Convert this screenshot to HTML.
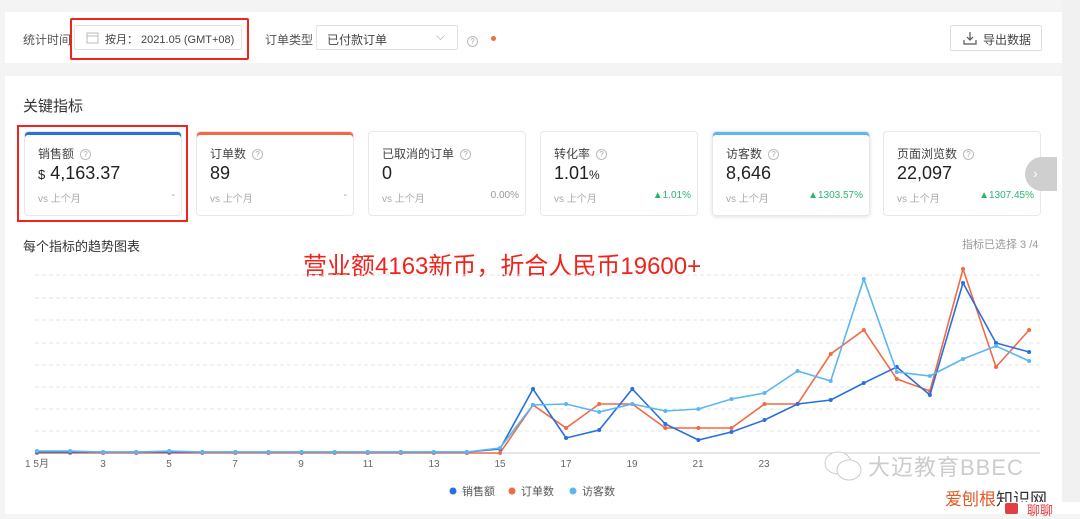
<!DOCTYPE html>
<html><head><meta charset="utf-8"><style>
*{margin:0;padding:0;box-sizing:border-box}
body{width:1080px;height:514px;background:#f4f4f5;font-family:"Liberation Sans","Noto Sans CJK SC",sans-serif;position:relative;overflow:hidden;color:#333}
.card{position:absolute;background:#fff}
.abs{position:absolute}
.q{display:inline-block;width:11px;height:11px;border:1px solid #bbb;border-radius:50%;font-size:8px;color:#aaa;text-align:center;line-height:9px;vertical-align:1px;margin-left:6px}
.m{position:absolute;top:131px;width:158px;height:85px;background:#fff;border:1px solid #e8e8e8;border-radius:4px}
.m .t{position:absolute;left:13px;top:13px;font-size:12px;color:#444}
.m .v{position:absolute;left:13px;top:31px;font-size:18px;color:#222}
.m .s{position:absolute;left:13px;top:58px;font-size:10px;color:#aaa}
.m .p{position:absolute;right:6px;top:58px;font-size:10px;color:#999}
.g{color:#2bb56b!important}
</style></head><body>
<div class="card" style="left:5px;top:12px;width:1057px;height:51px"></div>
<div class="abs" style="left:23px;top:31px;font-size:12px;color:#555">统计时间</div>
<div class="abs" style="left:74px;top:25px;width:168px;height:25px;border:1px solid #e3e3e3;border-radius:2px"></div>
<svg class="abs" style="left:86px;top:31px" width="13" height="13"><rect x="1" y="2" width="11" height="10" fill="none" stroke="#bbb"/><line x1="1" y1="5" x2="12" y2="5" stroke="#bbb"/></svg>
<div class="abs" style="left:105px;top:31px;font-size:11px;color:#444;white-space:nowrap">按月： 2021.05 (GMT+08)</div>
<div class="abs" style="left:70px;top:18px;width:179px;height:42px;border:2px solid #f0241c;border-radius:2px"></div>
<div class="abs" style="left:265px;top:31px;font-size:12px;color:#555">订单类型</div>
<div class="abs" style="left:316px;top:25px;width:142px;height:25px;border:1px solid #e3e3e3;border-radius:2px;font-size:12px;color:#444;padding:5px 10px">已付款订单<span style="position:absolute;right:12px;top:3px;color:#aaa">⌵</span></div>
<div class="abs" style="left:467px;top:32px"><span class="q" style="margin:0">?</span></div>
<div class="abs" style="left:491px;top:36px;width:5px;height:5px;border-radius:50%;background:#f26a45"></div>
<div class="abs" style="left:950px;top:25px;width:92px;height:26px;border:1px solid #ddd;border-radius:2px;font-size:12px;color:#444;padding:5px 0 0 32px">导出数据</div>
<svg class="abs" style="left:963px;top:31px" width="14" height="14"><path d="M7 1v8M4 6l3 3 3-3M1 9v4h12V9" fill="none" stroke="#555" stroke-width="1.2"/></svg>

<div class="card" style="left:5px;top:76px;width:1057px;height:438px"></div>
<div class="abs" style="left:23px;top:95px;font-size:15px;color:#333">关键指标</div>

<div class="m" style="left:24px;box-shadow:inset 0 3px #2a6fdb"><div class="t">销售额<span class="q">?</span></div><div class="v"><span style="font-size:13px">$</span> 4,163.37</div><div class="s">vs 上个月</div><div class="p">-</div></div>
<div class="abs" style="left:17px;top:125px;width:171px;height:97px;border:2px solid #f0241c"></div>
<div class="m" style="left:196px;box-shadow:inset 0 3px #f26a45"><div class="t">订单数<span class="q">?</span></div><div class="v">89</div><div class="s">vs 上个月</div><div class="p">-</div></div>
<div class="m" style="left:368px"><div class="t">已取消的订单<span class="q">?</span></div><div class="v">0</div><div class="s">vs 上个月</div><div class="p">0.00%</div></div>
<div class="m" style="left:540px"><div class="t">转化率<span class="q">?</span></div><div class="v">1.01<span style="font-size:12px">%</span></div><div class="s">vs 上个月</div><div class="p g">▲1.01%</div></div>
<div class="m" style="left:712px;box-shadow:inset 0 3px #5bb6f2,0 1px 4px rgba(0,0,0,.12)"><div class="t">访客数<span class="q">?</span></div><div class="v">8,646</div><div class="s">vs 上个月</div><div class="p g">▲1303.57%</div></div>
<div class="m" style="left:883px"><div class="t">页面浏览数<span class="q">?</span></div><div class="v">22,097</div><div class="s">vs 上个月</div><div class="p g">▲1307.45%</div></div>
<div class="abs" style="left:1025px;top:157px;width:32px;height:34px;border-radius:17px 0 0 17px;background:#cfcfcf;color:#fff;font-size:14px;padding:8px 0 0 8px">›</div>

<div class="abs" style="left:23px;top:236px;font-size:13px;color:#333">每个指标的趋势图表</div>
<div class="abs" style="left:962px;top:236px;font-size:11px;color:#999">指标已选择 3 /4</div>
<div class="abs" style="left:303px;top:246px;font-size:24px;color:#f0241c">营业额4163新币，折合人民币19600+</div>

<svg class="abs" style="left:0;top:0" width="1080" height="514">
<g stroke="#e6e6e6" stroke-dasharray="4 3">
<line x1="35" x2="1040" y1="275" y2="275"/><line x1="35" x2="1040" y1="298" y2="298"/><line x1="35" x2="1040" y1="320" y2="320"/><line x1="35" x2="1040" y1="343" y2="343"/><line x1="35" x2="1040" y1="365" y2="365"/><line x1="35" x2="1040" y1="387" y2="387"/><line x1="35" x2="1040" y1="409" y2="409"/><line x1="35" x2="1040" y1="431" y2="431"/></g>
<line x1="35" x2="1040" y1="453" y2="453" stroke="#ccc"/>
<g font-size="10" fill="#666" text-anchor="middle" font-family="Liberation Sans,Noto Sans CJK SC,sans-serif">
<text x="37" y="467">1 5月</text><text x="103" y="467">3</text><text x="169" y="467">5</text><text x="235" y="467">7</text><text x="301" y="467">9</text><text x="368" y="467">11</text><text x="434" y="467">13</text><text x="500" y="467">15</text><text x="566" y="467">17</text><text x="632" y="467">19</text><text x="698" y="467">21</text><text x="764" y="467">23</text></g>
<g id="c"></g>
<g font-size="11" fill="#555" font-family="Liberation Sans,Noto Sans CJK SC,sans-serif">
<circle cx="453" cy="491" r="3.5" fill="#2a6fdb"/><text x="462" y="495">销售额</text>
<circle cx="512" cy="491" r="3.5" fill="#f26a45"/><text x="521" y="495">订单数</text>
<circle cx="573" cy="491" r="3.5" fill="#5bb6f2"/><text x="582" y="495">访客数</text></g>
</svg>
<script>
var B=[452,452,452,452,452,452,452,452,452,452,452,452,452,452,449,389,438,430,389,424,440,432,420,404,400,383,367,395,283,343,352];
var O=[453,453,453,453,453,453,453,453,453,453,453,453,453,453,453,405,428,404,404,428,428,428,404,404,354,330,379,391,269,367,330];
var L=[451,451,452,452,451,452,452,452,452,452,452,452,452,452,448,405,404,412,404,411,409,399,393,371,381,279,372,376,359,346,361];
var g=document.getElementById('c'),h='';
[[O,'#f26a45'],[B,'#2a6fdb'],[L,'#5bb6f2']].forEach(function(s){var p=s[0].map(function(y,i){return (37+i*33.07).toFixed(1)+','+y}).join(' ');
h+='<polyline points="'+p+'" fill="none" stroke="'+s[1]+'" stroke-width="1.6"/>';
s[0].forEach(function(y,i){h+='<circle cx="'+(37+i*33.07).toFixed(1)+'" cy="'+y+'" r="2" fill="'+s[1]+'"/>'})});
g.innerHTML=h;
</script>
<div class="abs" style="left:868px;top:450px;font-size:22px;color:rgba(195,195,195,.85);letter-spacing:1px">大迈教育BBEC</div>
<svg class="abs" style="left:822px;top:450px" width="42" height="32"><ellipse cx="16" cy="13" rx="13" ry="11" fill="#fff" stroke="#ccc"/><ellipse cx="27" cy="20" rx="12" ry="10" fill="#fff" stroke="#ccc"/></svg>
<div class="abs" style="left:1062px;top:0;width:18px;height:514px;background:#f1f1f1"></div>
<div class="abs" style="left:945px;top:485px;font-size:17px;color:#e05a2a">爱刨根<span style="color:#333">知识网</span></div>
<div class="abs" style="left:1000px;top:502px;width:80px;height:12px;background:#fff"></div>
<div class="abs" style="left:1005px;top:503px;width:13px;height:11px;background:#e04040;border-radius:2px"></div>
<div class="abs" style="left:1027px;top:500px;font-size:13px;color:#e04040">聊聊</div>
</body></html>
